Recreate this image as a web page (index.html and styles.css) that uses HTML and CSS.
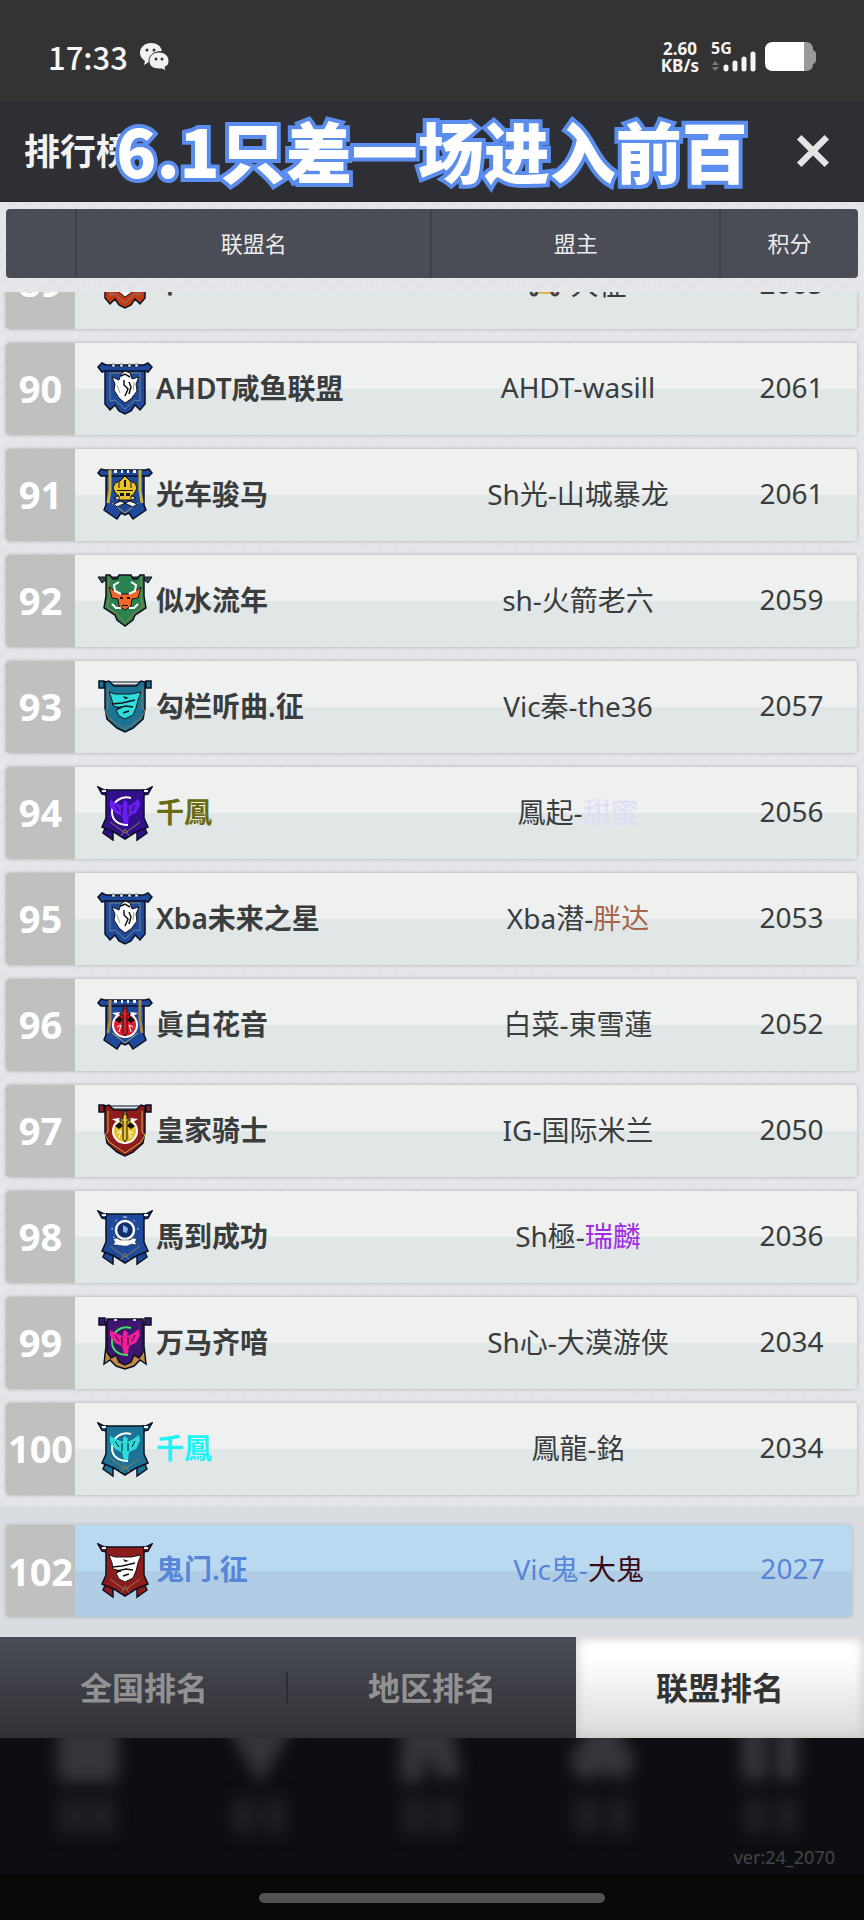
FILE: index.html
```html
<!DOCTYPE html>
<html lang="zh-CN">

<head>
    <meta charset="UTF-8">
    <meta name="viewport" content="width=device-width, initial-scale=1.0">
    <title>排行榜</title>
    <link rel="stylesheet" href="styles.css">
</head>

<body>
    <!-- Banner cloths and badges, coloured with --cloth / --mark -->
    <svg class="sprite" aria-hidden="true">
        <symbol id="banner-castle" viewBox="0 0 56 56">
            <g stroke="#0b1020" stroke-width="1.5">
                <path fill="var(--cloth)" d="M8 8V42L13 48L18 43L22 49L28 52L34 49L38 43L43 48L48 42V8Z" />
                <path fill="var(--cloth)" d="M1 5L5 1L9 3H47L51 1L55 5L51 10L48 9H8L5 10Z" />
            </g>
            <path fill="#eef1f4" stroke="#0b1020" stroke-width=".5" d="M15 2h3v3h-3zM23 2h3v3h-3zM31 2h3v3h-3zM38 2h3v3h-3z" />
            <path fill="none" stroke="#7d7f86" d="M13 11H43V39L38 38L28 47L18 38L13 39Z" />
        </symbol>
        <symbol id="banner-ribbon" viewBox="0 0 56 56">
            <g stroke="#0b1020" stroke-width="1.5">
                <path fill="var(--cloth)" d="M9 7V37L7 42L20 51L24 45L28 47L32 45L36 51L49 42L47 37V7Z" />
                <path fill="var(--cloth)" d="M1 5L4 1L8 2H48L52 1L55 5L52 8H4Z" />
            </g>
            <path fill="#eef1f4" d="M17 2h3v3h-3zM24 2h2v3h-2zM30 2h2v3h-2zM36 2h3v3h-3z" />
            <path stroke="var(--trim)" stroke-width="3" d="M13 2V22L11 35M43 2V22L45 35" />
            <path fill="none" stroke="#b6a05a" d="M15 35L28 45L41 35" />
        </symbol>
        <symbol id="banner-horn" viewBox="0 0 56 56">
            <path fill="#3b4946" stroke="#0b1020" d="M1 3H55L51 9L47 6H9L5 9Z" />
            <path fill="var(--cloth)" stroke="#0b1020" stroke-width="1.5"
                d="M9 1H13L16 5H20L22 1H34L36 5H40L43 1H47V22L49 34L38 41L36 46L28 52L20 46L18 41L7 34L9 22Z" />
            <path fill="none" stroke="#a8823f" d="M12 3V24L10 33L20 40L28 49L36 40L46 33L44 24V3" />
        </symbol>
        <symbol id="banner-rod" viewBox="0 0 56 56">
            <path fill="#e6eaee" stroke="#0b1020" d="M5 2H51V5H5Z" />
            <path fill="var(--cloth)" stroke="#0b1020" stroke-width="1.5"
                d="M2 1H7V8H2ZM49 1H54V8H49ZM8 2L12 1L17 6H39L44 1L48 2V28L46 39L36 48L28 52L20 48L10 39L8 28Z" />
            <path fill="none" stroke="var(--trim)" d="M11 7V28L8 31L12 38L28 49L44 38L48 31L45 28V7" />
        </symbol>
        <symbol id="banner-tails" viewBox="0 0 56 56">
            <g stroke="#0b1020" stroke-width="1.5">
                <path fill="var(--cloth)" d="M1 1L7 4H10V9L5 8ZM55 1L49 4H46V9L51 8Z" />
                <path fill="var(--cloth)" d="M10 38L6 47L16 54V46L40 46V54L50 47L46 38Z" />
                <path fill="var(--cloth)" d="M9 4H47V32L51 41L39 46L28 53L17 46L5 41L9 32Z" />
            </g>
            <path fill="#eef1f4" d="M5 4h4v2h-4zM47 4h4v2h-4z" />
            <path fill="none" stroke="var(--trim)" d="M24 50L28 43L32 50M13 36L28 47L43 36" />
        </symbol>
        <symbol id="banner-flame" viewBox="0 0 56 56">
            <g stroke="#0b1020" stroke-width="1.5">
                <path fill="#c08a45" d="M9 6V30L7 48L13 44L19 50L28 53L37 50L43 44L49 48L47 30V6Z" />
                <path fill="var(--cloth)" d="M10 3V36L14 42L19 39L22 46L28 49L34 46L37 39L42 42L46 36V3Z" />
                <path fill="var(--cloth)" d="M2 2H8V9H2ZM48 2H54V9H48Z" />
            </g>
            <path fill="#d5c9dc" d="M17 3h3v2h-3zM36 3h3v2h-3z" />
        </symbol>

        <symbol id="badge-horse" viewBox="0 0 56 56">
            <path fill="#fff" stroke="#141414" d="M15 15L22 18L24 12L28 9L33 11L35 17L42 15L39 22L40 29L34 37L28 41L22 36L17 28L18 22Z" />
            <path fill="none" stroke="#141414" stroke-width="1.5" d="M24 14L28 12L33 15M27 18V23L31 27L28 34M32 20L34 25L32 32" />
            <path fill="none" stroke="#999" d="M20 23L23 31M37 20L36 28" />
        </symbol>
        <symbol id="badge-pirate" viewBox="0 0 56 56">
            <path fill="#f0f0f0" stroke="#141414" d="M17 30L36 39L40 36L21 28ZM39 30L20 39L17 36L35 28Z" />
            <path fill="var(--mark)" stroke="#141414" d="M16 20L18 15L23 13L28 8L33 13L38 15L40 20L37 26L34 28V32H22V28L19 26Z" />
            <path fill="none" stroke="#141414" d="M22 14V20M34 14V20" />
            <path fill="#141414" d="M20 22h16v1H20zM23 25h4v3h-4zM29 25h4v3h-4zM27 12h2v7h-2z" />
        </symbol>
        <symbol id="badge-bull" viewBox="0 0 56 56">
            <path fill="var(--mark)" stroke="#141414" d="M12 13L22 20H34L44 13L41 24L35 25L34 32L28 36L22 32L21 25L15 24Z" />
            <path fill="none" stroke="#fff" stroke-width="2" d="M22 8L17 11L18 17L24 20M34 8L39 11L38 17L32 20M15 30L19 34H24M41 30L37 34H32" />
            <path fill="#141414" d="M23 23h3v2h-3zM30 23h3v2h-3zM25 31h6v1h-6z" />
        </symbol>
        <symbol id="badge-wolf" viewBox="0 0 56 56">
            <path fill="var(--mark)" stroke="#141414" d="M12 12L18 14H34L44 12L41 20L39 28L36 35L28 39L22 36L19 30L24 28L16 26L15 20Z" />
            <path fill="none" stroke="#141414" stroke-width="1.5" d="M15 24L25 23L38 20M20 28L29 26L36 27M26 33L32 31" />
            <path fill="#141414" d="M26 16L32 18L28 19Z" />
        </symbol>
        <symbol id="badge-phoenix" viewBox="0 0 56 56">
            <path fill="none" stroke="var(--moon)" stroke-width="2" d="M34 12C24 9 15 16 15 26C15 34 21 39 31 39" />
            <path fill="var(--mark)" d="M26 16L28 14L31 17L30 20L35 18L42 13L43 19L39 27L32 30L31 38H27L25 30L18 27L13 20V14L21 18L26 20Z" />
            <path fill="none" stroke="#141414" d="M25 21V29M31 21V29M18 19L22 25M38 19L35 25" />
        </symbol>
        <symbol id="badge-sword" viewBox="0 0 56 56">
            <circle cx="28" cy="27" r="12" fill="var(--mark)" stroke="#fff" stroke-width="2" />
            <path fill="#141414" d="M18 22L23 18L26 22L22 25ZM38 22L33 18L30 22L34 25Z" />
            <path fill="none" stroke="#fff" d="M20 29L24 27L22 34M36 29L32 27L34 34" />
            <path fill="#fff" d="M15 15L23 14L20 18ZM41 15L33 14L36 18Z" />
            <path fill="var(--mark)" stroke="#141414" d="M27 7H29V11H30V15H33V17H30V35L28 38L26 35V17H23V15H26V11H27Z" />
        </symbol>
        <symbol id="badge-skull" viewBox="0 0 56 56">
            <circle cx="28" cy="20" r="9" fill="#12306b" stroke="#fff" stroke-width="2.5" />
            <path fill="none" stroke="#dfe8f5" stroke-dasharray="2 7" d="M28 7A13 13 0 0 1 41 20M28 7A13 13 0 0 0 15 20L17 28" />
            <path fill="#8fb6ec" d="M26 15L31 18L30 23L26 22Z" />
            <path fill="#fff" stroke="#141414" stroke-width=".5" d="M16 29L20 28L23 30H33L36 28L40 29L38 32L40 35L35 34L30 36H26L20 35L16 35L18 32Z" />
        </symbol>
    </svg>

    <div class="app">
        <div class="status-bar">
            <span class="clock">17:33</span>
            <svg class="wechat" viewBox="0 0 30 30" aria-label="微信">
                <path fill="#f2f2f2" d="M11 1C5 1 0 5 0 11c0 3 2 6 5 8l-1 4 5-3h2c-2-6 3-11 11-11C21 4 17 1 11 1Z" />
                <path fill="#f2f2f2" stroke="#333" d="M19 10c-6 0-10 4-10 9s4 8 10 8h3l4 2-1-4c3-1 4-4 4-6 0-5-4-9-10-9Z" />
                <g fill="#333">
                    <circle cx="7" cy="8" r="1.5" />
                    <circle cx="14" cy="8" r="1.5" />
                    <circle cx="16" cy="17" r="1.5" />
                    <circle cx="22" cy="17" r="1.5" />
                </g>
            </svg>
            <span class="speed">2.60<br>KB/s</span>
            <svg class="signal" viewBox="0 0 46 30" aria-label="5G">
                <text x="0" y="12" class="network">5G</text>
                <path fill="#777" d="M1 23L4 19L8 23ZM1 25H8L4 29Z" />
                <path stroke="#f5f5f5" stroke-width="5" stroke-linecap="round" d="M15 25V27M24 21V27M33 17V27M42 12V27" />
            </svg>
            <svg class="battery" viewBox="0 0 52 30" aria-hidden="true">
                <path fill="#9a9a9a" d="M39 0h2q7 0 7 8q3 1 3 4v6q0 3-3 4q0 7-7 7h-2Z" />
                <path fill="#fff" d="M8 0h31v29H8q-8 0-8-8V8q0-8 8-8Z" />
            </svg>
        </div>

        <header class="title-bar">
            <h1>排行榜</h1>
            <p class="caption">6.1只差一场进入前百</p>
            <button class="close" type="button" aria-label="关闭">
                <svg viewBox="0 0 32 32"><path d="M3 3L29 29M29 3L3 29" /></svg>
            </button>
        </header>

        <table class="ranking">
            <thead>
                <tr>
                    <th></th>
                    <th>联盟名</th>
                    <th>盟主</th>
                    <th>积分</th>
                </tr>
            </thead>
            <tbody>
                <tr>
                    <td class="rank">89</td>
                    <td class="name"><svg class="emblem ember"><use href="#banner-castle" /><use href="#badge-horse" /></svg>千</td>
                    <td class="owner"><svg class="scooter" viewBox="0 0 32 28">
                            <path fill="none" stroke="#e3b04b" stroke-width="4" d="M4 4H9L12 23H22L27 12" />
                            <circle cx="5" cy="23" r="3" fill="#ddd" stroke="#444" stroke-width="3" />
                            <circle cx="26" cy="23" r="3" fill="#ddd" stroke="#444" stroke-width="3" />
                        </svg>-大征</td>
                    <td class="score">2065</td>
                </tr>
                <tr>
                    <td class="rank">90</td>
                    <td class="name"><svg class="emblem blue"><use href="#banner-castle" /><use href="#badge-horse" /></svg>AHDT咸鱼联盟</td>
                    <td class="owner">AHDT-wasill</td>
                    <td class="score">2061</td>
                </tr>
                <tr>
                    <td class="rank">91</td>
                    <td class="name"><svg class="emblem blue gold"><use href="#banner-ribbon" /><use href="#badge-pirate" /></svg>光车骏马</td>
                    <td class="owner">Sh光-山城暴龙</td>
                    <td class="score">2061</td>
                </tr>
                <tr>
                    <td class="rank">92</td>
                    <td class="name"><svg class="emblem green"><use href="#banner-horn" /><use href="#badge-bull" /></svg>似水流年</td>
                    <td class="owner">sh-火箭老六</td>
                    <td class="score">2059</td>
                </tr>
                <tr>
                    <td class="rank">93</td>
                    <td class="name"><svg class="emblem teal"><use href="#banner-rod" /><use href="#badge-wolf" /></svg>勾栏听曲.征</td>
                    <td class="owner">Vic秦-the36</td>
                    <td class="score">2057</td>
                </tr>
                <tr>
                    <td class="rank">94</td>
                    <td class="name olive"><svg class="emblem purple"><use href="#banner-tails" /><use href="#badge-phoenix" /></svg>千鳳</td>
                    <td class="owner">鳳起-<span class="lavender">甜蜜</span></td>
                    <td class="score">2056</td>
                </tr>
                <tr>
                    <td class="rank">95</td>
                    <td class="name"><svg class="emblem blue"><use href="#banner-castle" /><use href="#badge-horse" /></svg>Xba未来之星</td>
                    <td class="owner">Xba潜-<span class="brown">胖达</span></td>
                    <td class="score">2053</td>
                </tr>
                <tr>
                    <td class="rank">96</td>
                    <td class="name"><svg class="emblem blue scarlet"><use href="#banner-ribbon" /><use href="#badge-sword" /></svg>眞白花音</td>
                    <td class="owner">白菜-東雪蓮</td>
                    <td class="score">2052</td>
                </tr>
                <tr>
                    <td class="rank">97</td>
                    <td class="name"><svg class="emblem red gold"><use href="#banner-rod" /><use href="#badge-sword" /></svg>皇家骑士</td>
                    <td class="owner">IG-国际米兰</td>
                    <td class="score">2050</td>
                </tr>
                <tr>
                    <td class="rank">98</td>
                    <td class="name"><svg class="emblem blue"><use href="#banner-tails" /><use href="#badge-skull" /></svg>馬到成功</td>
                    <td class="owner">Sh極-<span class="violet">瑞麟</span></td>
                    <td class="score">2036</td>
                </tr>
                <tr>
                    <td class="rank">99</td>
                    <td class="name"><svg class="emblem plum"><use href="#banner-flame" /><use href="#badge-phoenix" /></svg>万马齐喑</td>
                    <td class="owner">Sh心-大漠游侠</td>
                    <td class="score">2034</td>
                </tr>
                <tr>
                    <td class="rank">100</td>
                    <td class="name cyan"><svg class="emblem teal"><use href="#banner-tails" /><use href="#badge-phoenix" /></svg>千鳳</td>
                    <td class="owner">鳳龍-銘</td>
                    <td class="score">2034</td>
                </tr>
            </tbody>
            <tfoot>
                <tr>
                    <td class="rank">102</td>
                    <td class="name"><svg class="emblem red"><use href="#banner-tails" /><use href="#badge-wolf" /></svg>鬼门.征</td>
                    <td class="owner">Vic鬼-<span class="maroon">大鬼</span></td>
                    <td class="score">2027</td>
                </tr>
            </tfoot>
        </table>

        <nav class="tabs">
            <button type="button">全国排名</button>
            <button type="button">地区排名</button>
            <button type="button" class="active">联盟排名</button>
        </nav>

        <footer class="backdrop">
            <svg class="menu-blur" viewBox="0 0 864 110" preserveAspectRatio="none" aria-hidden="true">
                <g fill="#35363b">
                    <path d="M58 -12H118V44H58Z" />
                    <path d="M226 -12H294L260 46Z" />
                    <path d="M402 -12H452L462 40H438L428 14L422 44H400Z" />
                    <path d="M590 -12H616L636 24L622 44L604 34L584 44L568 24Z" />
                    <path d="M742 -12H766V42H742ZM776 -12H798V42H776Z" />
                </g>
                <g fill="#1f2023">
                    <path d="M58 60H86V96H58ZM90 60H116V96H90Z" />
                    <path d="M232 60H256V96H232ZM264 60H286V96H264Z" />
                    <path d="M402 60H428V96H402ZM434 60H458V96H434Z" />
                    <path d="M574 60H598V96H574ZM608 60H630V96H608Z" />
                    <path d="M744 60H766V96H744ZM776 60H798V96H776Z" />
                </g>
            </svg>
            <span class="version">ver:24_2070</span>
        </footer>
        <div class="home-bar"></div>
    </div>
</body>

</html>
```
FILE: styles.css
```css
* {
    box-sizing: border-box;
}

body {
    margin: 0;
    background-color: #080808;
    color: #3a3d3e;
    font-family: "Noto Sans", "Noto Sans CJK SC", sans-serif;
}

h1,
p {
    margin: 0;
}

button {
    border: none;
    padding: 0;
    font-family: inherit;
    cursor: pointer;
}

.sprite {
    position: absolute;
    width: 0;
    height: 0;
}

.app {
    display: flex;
    flex-direction: column;
    height: 100vh;
    overflow: hidden;
}

/* phone status bar */
.status-bar {
    display: flex;
    align-items: center;
    flex: none;
    height: 101px;
    padding: 12px 47px 0 48px;
    background-color: #333;
    color: #f5f5f5;
}

.clock {
    font-family: "Noto Sans CJK SC", sans-serif;
    font-size: 31px;
    font-weight: 500;
    line-height: 34px;
}

.wechat {
    width: 30px;
    height: 30px;
    margin-left: 12px;
}

.speed {
    margin-left: auto;
    font-size: 17px;
    font-weight: 700;
    line-height: 17px;
    text-align: center;
}

.signal {
    width: 46px;
    height: 30px;
    margin-left: 12px;
    overflow: visible;
}

.network {
    fill: #f5f5f5;
    font-size: 16px;
    font-weight: 700;
}

.battery {
    width: 52px;
    height: 30px;
    margin-left: 8px;
}

/* title */
.title-bar {
    position: relative;
    display: flex;
    align-items: center;
    justify-content: space-between;
    flex: none;
    height: 101px;
    padding: 0 34px 0 24px;
    background-color: #2e2f35;
    border-bottom: 1px solid #25262a;
}

.title-bar h1 {
    padding-bottom: 4px;
    color: #f2f2f2;
    font-size: 36px;
    font-weight: 700;
}

.caption {
    position: absolute;
    top: 0;
    left: 0;
    right: 0;
    color: #fff;
    font-family: "Noto Sans CJK SC", sans-serif;
    font-size: 66px;
    font-weight: 900;
    line-height: 96px;
    text-align: center;
    white-space: nowrap;
    -webkit-text-stroke: 8px #5b8def;
    paint-order: stroke fill;
}

.close {
    position: relative;
    width: 34px;
    height: 34px;
    background: none;
}

.close svg {
    display: block;
    width: 100%;
    stroke: #e4e4e2;
    stroke-width: 6;
}

/* ranking table */
.ranking {
    display: flex;
    flex-direction: column;
    flex: 1;
    min-height: 0;
    background: repeating-linear-gradient(135deg, #e5e7ea 0 6px, #e2e4e7 6px 12px);
}

.ranking tr {
    display: grid;
    grid-template-columns: 69px 355fr 288fr 139fr;
    flex: none;
}

.ranking thead {
    flex: none;
    padding: 7px 6px 14px;
}

.ranking thead tr {
    height: 69px;
    border-radius: 4px;
    background-color: #4a4d55;
    color: #ececec;
}

.ranking th {
    display: flex;
    align-items: center;
    justify-content: center;
    padding: 0 0 4px;
    font-size: 22px;
    font-weight: 400;
}

.ranking th + th {
    border-left: 2px solid #3e4148;
}

/* scrolled to the end of the list, the first row is cut off */
.ranking tbody {
    display: flex;
    flex-direction: column;
    justify-content: flex-end;
    gap: 14px;
    flex: 1;
    min-height: 0;
    padding: 0 7px 11px 6px;
    overflow: hidden;
}

.ranking tbody tr,
.ranking tfoot tr {
    height: 92px;
    border-radius: 4px;
    background: linear-gradient(#eff1f1 50%, #e1e6e7 50%);
    box-shadow: 0 0 3px 1px #bfc2c5;
    overflow: hidden;
}

.ranking td {
    display: flex;
    align-items: center;
    justify-content: center;
    padding: 0 0 4px;
    font-size: 28px;
}

.ranking .rank {
    padding-bottom: 2px;
    background-color: #bfc0c0;
    color: #fff;
    font-size: 38px;
    font-weight: 700;
}

.ranking .name {
    justify-content: flex-start;
    gap: 3px;
    padding-left: 22px;
    font-weight: 600;
}

.ranking .owner {
    padding-left: 8px;
}

.ranking .score {
    padding-left: 8px;
}

.ranking tbody tr:first-child .owner,
.ranking tbody tr:first-child .score {
    padding-bottom: 0;
}

.ranking tfoot {
    flex: none;
    padding: 19px 12px 20px 6px;
    background-color: #d9dde1;
}

.ranking tfoot tr {
    grid-template-columns: 69px 355fr 288fr 133fr;
    background: linear-gradient(#b9d9f1 50%, #b1cde5 50%);
    color: #5686d8;
}

.ranking tfoot td {
    padding-bottom: 6px;
}

.ranking tfoot .rank {
    padding-bottom: 0;
}

.ranking tfoot .score {
    padding-left: 14px;
}

.ranking .olive {
    color: #6b6b10;
}

.ranking .cyan {
    color: #1ff3f6;
}

.lavender {
    color: #dddef6;
}

.brown {
    color: #a5654a;
}

.violet {
    color: #a02be0;
}

.maroon {
    color: #3d0a14;
}

.scooter {
    width: 32px;
    height: 28px;
}

/* alliance emblems */
.emblem {
    --trim: #8a7a55;
    --mark: #fff;
    --moon: #fff;
    flex: none;
    width: 56px;
    height: 56px;
    margin-top: 6px;
}

.blue {
    --cloth: #1f4a9c;
}

.green {
    --cloth: #2a8250;
    --mark: #f0672a;
}

.teal {
    --cloth: #1d7396;
    --mark: #2fdcdc;
}

.purple {
    --cloth: #32108c;
    --mark: #6a1cf5;
}

.plum {
    --cloth: #3d1670;
    --mark: #f01c9c;
    --moon: #3ee060;
}

.red {
    --cloth: #8e1c1c;
}

.ember {
    --cloth: #c43a14;
}

.gold {
    --trim: #c9b23a;
    --mark: #e8c22c;
}

.scarlet {
    --trim: #a88648;
    --mark: #e0202c;
}

/* bottom tabs */
.tabs {
    display: grid;
    grid-template-columns: repeat(3, 1fr);
    flex: none;
    height: 101px;
    background: linear-gradient(#4a4c56, #303135);
}

.tabs button {
    padding-bottom: 4px;
    background: none;
    color: #929292;
    font-size: 32px;
    font-weight: 600;
}

.tabs button:first-child {
    background: linear-gradient(#2d2e33, #2d2e33) right center / 2px 32px no-repeat;
}

.tabs .active {
    background: linear-gradient(#fff 20%, #dadada);
    box-shadow: inset 0 0 12px #c4c4c4;
    color: #333;
}

/* dimmed game menu behind the panel */
.backdrop {
    position: relative;
    flex: none;
    height: 137px;
    background-color: #0d0e11;
    overflow: hidden;
}

.menu-blur {
    display: block;
    width: 100%;
    height: 110px;
    filter: blur(8px);
    overflow: visible;
}

.version {
    position: absolute;
    right: 29px;
    bottom: 6px;
    color: #444548;
    font-size: 18px;
}

.home-bar {
    flex: none;
    width: 40%;
    height: 10px;
    margin: 18px auto 17px;
    border-radius: 5px;
    background-color: #525252;
}
```
